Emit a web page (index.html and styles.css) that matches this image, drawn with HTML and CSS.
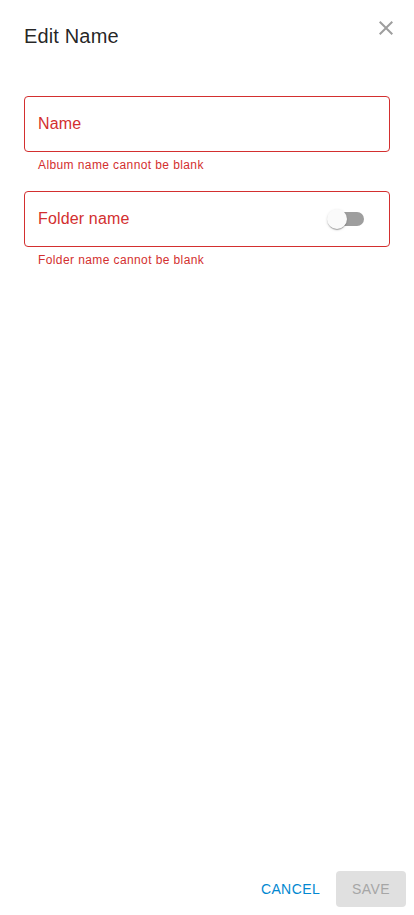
FILE: index.html
```html
<!DOCTYPE html>
<html>
<head>
<meta charset="utf-8">
<link rel="stylesheet" href="styles.css">
</head>
<body>
<div class="dialog">
  <div class="header">
    <h2 class="title">Edit Name</h2>
    <button class="close" aria-label="close">
      <svg width="24" height="24" viewBox="0 0 24 24"><path fill="currentColor" d="M19 6.41 17.59 5 12 10.59 6.41 5 5 6.41 10.59 12 5 17.59 6.41 19 12 13.41 17.59 19 19 17.59 13.41 12z"/></svg>
    </button>
  </div>
  <div class="content">
    <div class="field">
      <div class="box"><span class="label">Name</span></div>
      <p class="helper">Album name cannot be blank</p>
    </div>
    <div class="field">
      <div class="box"><span class="label">Folder name</span>
        <span class="switch"><span class="track"></span><span class="thumb"></span></span>
      </div>
      <p class="helper">Folder name cannot be blank</p>
    </div>
  </div>
  <div class="actions">
    <button class="btn cancel">Cancel</button>
    <button class="btn save" disabled>Save</button>
  </div>
</div>
</body>
</html>
```
FILE: styles.css
```css
html, body {
  margin: 0;
  padding: 0;
  background: #fff;
  font-family: "Liberation Sans", Arial, sans-serif;
}
.dialog {
  display: flex;
  flex-direction: column;
  height: 915px;
  box-sizing: border-box;
}
.header {
  display: flex;
  align-items: center;
  justify-content: space-between;
  padding: 20px 16px 0 24px;
  height: 32px;
}
.title {
  margin: 0;
  font-size: 20px;
  font-weight: 400;
  line-height: 32px;
  color: rgba(0,0,0,0.87);
  letter-spacing: 0.15px;
}
.close {
  border: none;
  background: none;
  padding: 0;
  margin-top: -16px;
  width: 24px;
  height: 24px;
  color: #9e9e9e;
  display: flex;
}
.content {
  flex: 1;
  padding: 44px 24px 0;
  display: flex;
  flex-direction: column;
  gap: 16px;
}
.field {
  display: flex;
  flex-direction: column;
}
.box {
  height: 56px;
  box-sizing: border-box;
  border: 1px solid #d32f2f;
  border-radius: 4px;
  display: flex;
  align-items: center;
  justify-content: space-between;
  padding: 0 25px 0 13px;
}
.label {
  font-size: 16px;
  color: #d32f2f;
  letter-spacing: 0.15px;
}
.helper {
  margin: 3px 0 0 14px;
  font-size: 12px;
  line-height: 20px;
  letter-spacing: 0.4px;
  color: #d32f2f;
}
.switch {
  position: relative;
  width: 37px;
  height: 20px;
  display: flex;
  align-items: center;
}
.track {
  margin-left: 3px;
  width: 34px;
  height: 14px;
  border-radius: 7px;
  background: #9e9e9e;
}
.thumb {
  position: absolute;
  left: 0;
  top: 0;
  width: 20px;
  height: 20px;
  border-radius: 50%;
  background: #fafafa;
  box-shadow: 0 2px 1px -1px rgba(0,0,0,0.2), 0 1px 1px 0 rgba(0,0,0,0.14), 0 1px 3px 0 rgba(0,0,0,0.12);
}
.actions {
  display: flex;
  justify-content: flex-end;
  gap: 8px;
  padding: 8px;
}
.btn {
  font-family: "Liberation Sans", Arial, sans-serif;
  font-size: 14px;
  font-weight: 400;
  letter-spacing: 0.4px;
  text-transform: uppercase;
  height: 36px;
  min-width: 64px;
  padding: 0 8px;
  border: none;
  border-radius: 4px;
  background: none;
}
.cancel {
  color: #0288d1;
}
.save {
  background: #e0e0e0;
  color: #a6a6a6;
  padding: 0 16px;
}
```
